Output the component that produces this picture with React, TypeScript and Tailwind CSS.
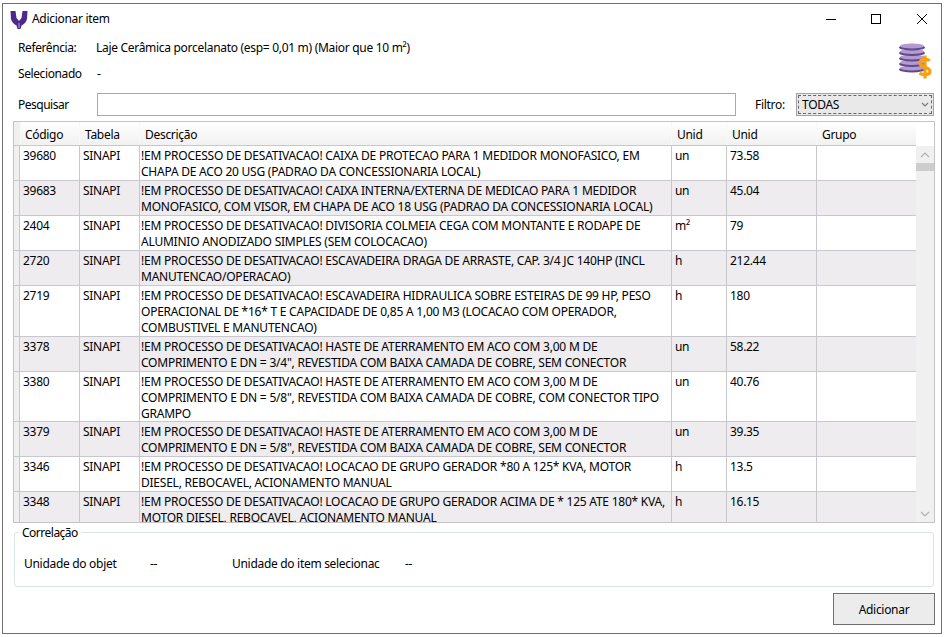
import React from "react";

type Row = {
  code: string;
  unit: React.ReactNode;
  price: string;
  height: string;
  lines: string[];
};

const PREFIX = "!EM PROCESSO DE DESATIVACAO! ";

const ROWS: Row[] = [
  { code: "39680", unit: "un", price: "73.58", height: "h-[35px]", lines: [PREFIX + "CAIXA DE PROTECAO PARA 1 MEDIDOR MONOFASICO, EM", "CHAPA DE ACO 20 USG (PADRAO DA CONCESSIONARIA LOCAL)"] },
  { code: "39683", unit: "un", price: "45.04", height: "h-[35px]", lines: [PREFIX + "CAIXA INTERNA/EXTERNA DE MEDICAO PARA 1 MEDIDOR", "MONOFASICO, COM VISOR, EM CHAPA DE ACO 18 USG (PADRAO DA CONCESSIONARIA LOCAL)"] },
  { code: "2404", unit: "m²", price: "79", height: "h-[35px]", lines: [PREFIX + "DIVISORIA COLMEIA CEGA COM MONTANTE E RODAPE DE", "ALUMINIO ANODIZADO SIMPLES (SEM COLOCACAO)"] },
  { code: "2720", unit: "h", price: "212.44", height: "h-[35px]", lines: [PREFIX + "ESCAVADEIRA DRAGA DE ARRASTE, CAP. 3/4 JC 140HP (INCL", "MANUTENCAO/OPERACAO)"] },
  { code: "2719", unit: "h", price: "180", height: "h-[51px]", lines: [PREFIX + "ESCAVADEIRA HIDRAULICA SOBRE ESTEIRAS DE 99 HP, PESO", "OPERACIONAL DE *16* T E CAPACIDADE DE 0,85 A 1,00 M3 (LOCACAO COM OPERADOR,", "COMBUSTIVEL E MANUTENCAO)"] },
  { code: "3378", unit: "un", price: "58.22", height: "h-[35px]", lines: [PREFIX + "HASTE DE ATERRAMENTO EM ACO COM 3,00 M DE", 'COMPRIMENTO E DN = 3/4", REVESTIDA COM BAIXA CAMADA DE COBRE, SEM CONECTOR'] },
  { code: "3380", unit: "un", price: "40.76", height: "h-[50px]", lines: [PREFIX + "HASTE DE ATERRAMENTO EM ACO COM 3,00 M DE", 'COMPRIMENTO E DN = 5/8", REVESTIDA COM BAIXA CAMADA DE COBRE, COM CONECTOR TIPO', "GRAMPO"] },
  { code: "3379", unit: "un", price: "39.35", height: "h-[35px]", lines: [PREFIX + "HASTE DE ATERRAMENTO EM ACO COM 3,00 M DE", 'COMPRIMENTO E DN = 5/8", REVESTIDA COM BAIXA CAMADA DE COBRE, SEM CONECTOR'] },
  { code: "3346", unit: "h", price: "13.5", height: "h-[35px]", lines: [PREFIX + "LOCACAO DE GRUPO GERADOR *80 A 125* KVA, MOTOR", "DIESEL, REBOCAVEL, ACIONAMENTO MANUAL"] },
  { code: "3348", unit: "h", price: "16.15", height: "h-[35px]", lines: [PREFIX + "LOCACAO DE GRUPO GERADOR ACIMA DE * 125 ATE 180* KVA,", "MOTOR DIESEL, REBOCAVEL, ACIONAMENTO MANUAL"] },
];

const AppLogo = () => (
  <svg width="18" height="20" viewBox="0 0 18 20" className="shrink-0">
    <path d="M0.500 1 H5.500 L6.500 8 L9 11 L11.500 8 L12.500 1 H17.500 L17 9 Q16 13 11.500 15.500 L10.500 19 H7.500 L6.500 15.500 Q2 13 1 9 Z" fill="#4b2a8c" />
    <path d="M9 13 L9 18" stroke="#8a5cc4" strokeWidth="2" />
  </svg>
);

const CoinsIcon = () => (
  <svg width="33" height="36" viewBox="0 0 33 36" className="shrink-0">
    {[25, 19.500, 14, 8.500, 3].map((cy) => (
      <g key={cy}>
        <ellipse cx="13" cy={cy + 1.500} rx="13" ry="3" fill="#5f4a86" />
        <ellipse cx="13" cy={cy} rx="12" ry="2.400" fill="#b49ad2" />
      </g>
    ))}
    <path d="M30.500 18 C28.500 15.500 21 15.500 21 20 C21 25 31 23 31 28.500 C31 32.500 23.500 32.500 20.500 30 M26 12.500 L26 35.500" fill="none" stroke="#fb9f0d" strokeWidth="3.200" />
  </svg>
);

const Cell = ({ className, children }: { className: string; children: React.ReactNode }) => (
  <div className={`shrink-0 border-r border-[#c9c7ce] pt-[2px] ${className}`}>{children}</div>
);

const TableHeader = () => (
  <div className="flex h-[24px] shrink-0 border-b border-[#c9c7ce] bg-gradient-to-b from-white to-[#f1f1f1] leading-[25px]">
    <div className="w-[6px] shrink-0 bg-[#f0f0f0]" />
    <div className="w-[60px] shrink-0 border-x border-[#f8f8f8] pl-[4px]">Código</div>
    <div className="w-[60px] shrink-0 border-r border-[#f8f8f8] pl-[5px]">Tabela</div>
    <div className="w-[532px] shrink-0 border-r border-[#f8f8f8] pl-[5px]">Descrição</div>
    <div className="w-[55px] shrink-0 border-r border-[#f8f8f8] pl-[5px]">Unid</div>
    <div className="w-[90px] shrink-0 border-r border-[#f8f8f8] pl-[5px]">Unid</div>
    <div className="w-[100px] shrink-0 pl-[5px]">Grupo</div>
  </div>
);

const TableRow = ({ row, shaded }: { row: Row; shaded: boolean }) => (
  <div className={`flex shrink-0 border-b border-[#c9c7ce] leading-[16px] ${row.height} ${shaded ? "bg-[#eeecef]" : "bg-white"}`}>
    <div className="w-[6px] shrink-0 border-r border-[#c9c7ce] bg-[#f0f0f0]" />
    <Cell className="w-[60px] pl-[3px]">{row.code}</Cell>
    <Cell className="w-[60px] pl-[3px]">SINAPI</Cell>
    <Cell className="w-[532px] pl-[1px] tracking-[-0.23px]">
      {row.lines.map((line) => (
        <div key={line} className="whitespace-nowrap">{line}</div>
      ))}
    </Cell>
    <Cell className="w-[55px] pl-[3px]">{row.unit}</Cell>
    <Cell className="w-[90px] pl-[3px]">{row.price}</Cell>
    <div className="w-[100px] shrink-0" />
  </div>
);

const ScrollBar = () => (
  <div className="flex w-[18px] shrink-0 flex-col">
    <div className="h-[24px] bg-white" />
    <div className="flex flex-1 flex-col bg-[#f0f0f0]">
      <div className="flex h-[17px] items-center justify-center">
        <svg width="10" height="6" viewBox="0 0 10 6"><path d="M1 5 L5 1 L9 5" fill="none" stroke="#b0b0b0" strokeWidth="1.200" /></svg>
      </div>
      <div className="h-[8px] bg-[#cdcdcd]" />
      <div className="flex-1" />
      <div className="flex h-[17px] items-center justify-center">
        <svg width="10" height="6" viewBox="0 0 10 6"><path d="M1 1 L5 5 L9 1" fill="none" stroke="#b0b0b0" strokeWidth="1.200" /></svg>
      </div>
    </div>
  </div>
);

export default function App() {
  return (
    <div className="h-[637px] w-[948px] overflow-hidden bg-white pl-[2px] pt-[3px] font-['Noto_Sans',sans-serif] text-[12px] tracking-[-0.3px] text-black">
      <div className="flex h-[631px] w-[940px] flex-col border border-[#6f6f6f] bg-white">
        {/* barra de titulo */}
        <div className="flex h-[29px] shrink-0 items-center">
          <div className="ml-[7px] mr-[4px] mt-[2px]"><AppLogo /></div>
          <span className="mt-[1px]">Adicionar item</span>
          <div className="ml-auto flex items-center">
            <svg width="12" height="12" viewBox="0 0 12 12" className="mr-[33px]"><path d="M1 6.500 H11" stroke="#000" /></svg>
            <svg width="12" height="12" viewBox="0 0 12 12" className="mr-[34px]"><rect x="1.500" y="1.500" width="9" height="9" fill="none" stroke="#000" /></svg>
            <svg width="12" height="12" viewBox="0 0 12 12" className="mr-[13px]"><path d="M1 1 L11 11 M11 1 L1 11" stroke="#000" /></svg>
          </div>
        </div>

        <div className="flex shrink-0 pl-[15px] pr-[9px]">
          <div className="flex-1">
            <div className="mt-[6px] flex h-[18px] items-center">
              <span className="w-[78px] tracking-[-0.4px]">Referência:</span>
              <span>Laje Cerâmica porcelanato (esp= 0,01 m) (Maior que 10 m²)</span>
            </div>
            <div className="mt-[8px] flex h-[18px] items-center">
              <span className="w-[79px] tracking-[-0.4px]">Selecionado</span>
              <span>-</span>
            </div>
          </div>
          <div className="mt-[10px]"><CoinsIcon /></div>
        </div>

        {/* busca e filtro */}
        <div className="ml-[15px] mt-[10px] flex h-[23px] shrink-0 items-center">
          <span className="w-[79px] tracking-[-0.5px]">Pesquisar</span>
          <div className="h-[23px] w-[639px] border border-[#a9a9a9] bg-white" />
          <span className="ml-[19px] mt-[1px] w-[41px]">Filtro:</span>
          <div className="flex h-[23px] w-[138px] items-center border border-[#a3a3a3] bg-[#e9e9e9] p-[1px]">
            <div className="flex h-full w-full items-center justify-between border border-dashed border-[#666] pl-[3px] pr-[2px]">
              <span className="mt-[1px]">TODAS</span>
              <svg width="8" height="6" viewBox="0 0 8 6"><path d="M1 1 L4 4 L7 1" fill="none" stroke="#777" strokeWidth="1.100" /></svg>
            </div>
          </div>
        </div>

        {/* grade */}
        <div className="ml-[10px] mt-[5px] flex h-[402px] w-[922px] shrink-0 overflow-hidden border border-[#c4c4c4]">
          <div className="flex w-[902px] shrink-0 flex-col overflow-hidden">
            <TableHeader />
            {ROWS.map((row, i) => (
              <TableRow key={row.code} row={row} shaded={i % 2 === 1} />
            ))}
          </div>
          <ScrollBar />
        </div>

        {/* correlacao */}
        <div className="relative ml-[11px] mt-[9px] flex h-[55px] w-[920px] shrink-0 items-center rounded-[3px] border border-[#dce3ea] pl-[9px]">
          <span className="absolute left-[4px] top-[-8px] bg-white px-[3px] leading-[16px] tracking-[-0.5px]">Correlação</span>
          <span className="mt-[8px] w-[126px] overflow-hidden whitespace-nowrap">Unidade do objet</span>
          <span className="mt-[8px] w-[82px]">--</span>
          <span className="mt-[8px] w-[173px] overflow-hidden whitespace-nowrap">Unidade do item selecionac</span>
          <span className="mt-[8px]">--</span>
        </div>

        <div className="mr-[6px] mt-[6px] flex shrink-0 justify-end">
          <div className="flex h-[32px] w-[102px] items-center justify-center border border-[#6f6f6f] bg-[#ececec] pt-[1px]">Adicionar</div>
        </div>
      </div>
    </div>
  );
}
